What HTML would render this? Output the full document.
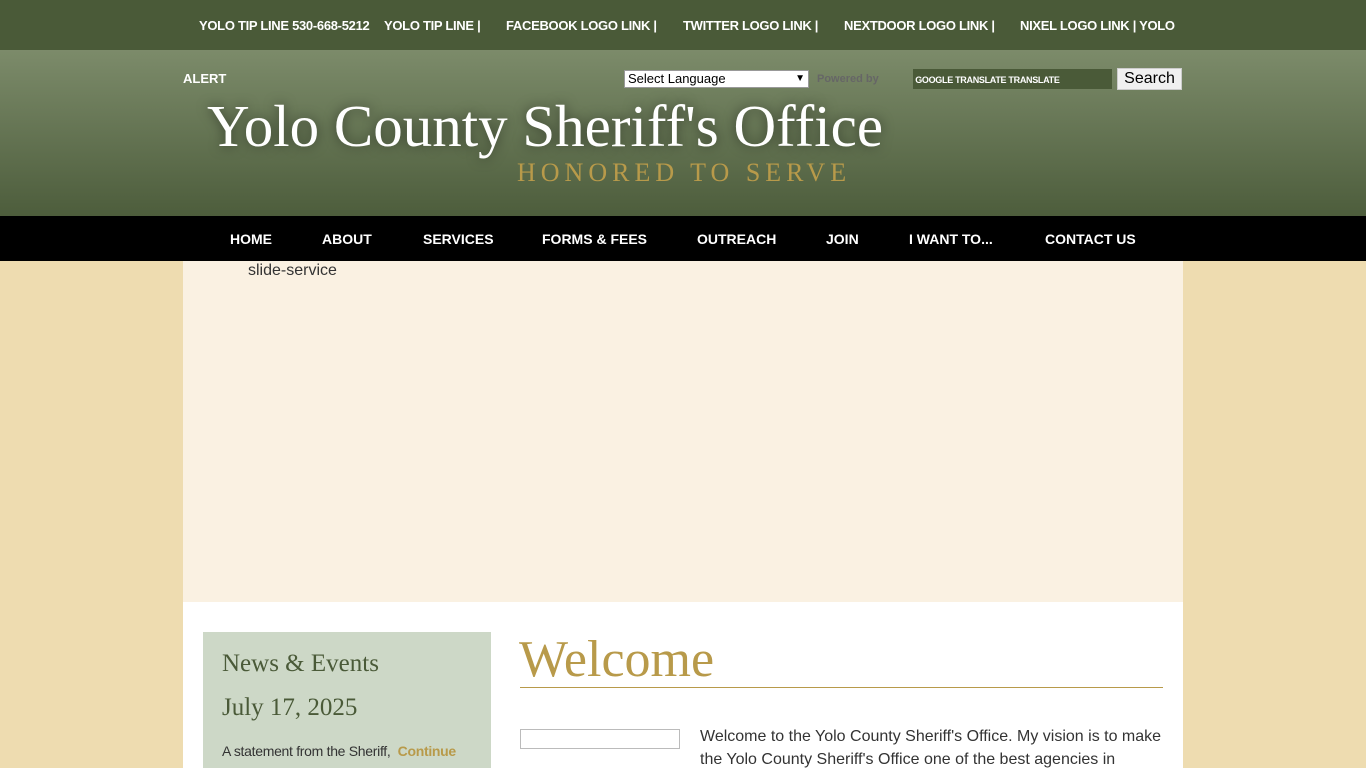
<!DOCTYPE html>
<html><head><meta charset="utf-8"><style>
*{margin:0;padding:0;box-sizing:border-box}
body{width:1366px;height:768px;overflow:hidden;background:#eedcb0;font-family:"Liberation Sans",sans-serif}
.top{position:absolute;left:0;top:0;width:1366px;height:50px;background:#4a5a38;color:#fff;font-weight:bold;font-size:13px;letter-spacing:-0.3px}
.top span{position:absolute;top:18px;white-space:nowrap}
.hdr{position:absolute;left:0;top:50px;width:1366px;height:166px;background:linear-gradient(#7c8b6a,#4d5d3c)}
.nav{position:absolute;left:0;top:216px;width:1366px;height:45px;background:#000}
.nav span{position:absolute;top:15px;color:#fff;font-weight:bold;font-size:14px}
.slide{position:absolute;left:183px;top:261px;width:1000px;height:341px;background:#faf1e2}
.main{position:absolute;left:183px;top:602px;width:1000px;height:166px;background:#fff;overflow:hidden}
.serif{font-family:"Liberation Serif",serif}
</style></head><body>
<div class="top">
<span style="left:199px">YOLO TIP LINE 530-668-5212</span>
<span style="left:384px">YOLO TIP LINE |</span>
<span style="left:506px">FACEBOOK LOGO LINK |</span>
<span style="left:683px">TWITTER LOGO LINK |</span>
<span style="left:844px">NEXTDOOR LOGO LINK |</span>
<span style="left:1020px">NIXEL LOGO LINK | YOLO</span>
</div>
<div class="hdr">
<div style="position:absolute;left:183px;top:21px;color:#fff;font-weight:bold;font-size:13px">ALERT</div>
<div style="position:absolute;left:624px;top:20px;width:185px;height:18px;background:#fff;border:1px solid #999;font-size:13px;padding-left:3px;line-height:16px">Select Language<span style="float:right;padding-right:3px;font-size:10px">▼</span></div>
<div style="position:absolute;left:817px;top:23px;color:#666;font-size:11px;font-weight:bold">Powered by</div>
<div style="position:absolute;left:913px;top:19px;width:199px;height:20px;background:#4a5a38;color:#fff;font-size:9px;font-weight:bold;line-height:22px;letter-spacing:-0.3px">&nbsp;GOOGLE TRANSLATE TRANSLATE</div>
<div style="position:absolute;left:1117px;top:18px;width:65px;height:22px;background:#f0f0f0;border:1px solid #ccc;font-size:16px;text-align:center;line-height:20px">Search</div>
<div class="serif" style="position:absolute;left:207px;top:42px;color:#fff;font-size:59px;text-shadow:0 0 12px rgba(0,0,0,.5);white-space:nowrap">Yolo County Sheriff's Office</div>
<div class="serif" style="position:absolute;left:517px;top:108px;color:#b89a4a;font-size:26px;letter-spacing:5px;white-space:nowrap">HONORED TO SERVE</div>
</div>
<div class="nav">
<span style="left:230px">HOME</span><span style="left:322px">ABOUT</span><span style="left:423px">SERVICES</span><span style="left:542px">FORMS &amp; FEES</span><span style="left:697px">OUTREACH</span><span style="left:826px">JOIN</span><span style="left:909px">I WANT TO...</span><span style="left:1045px">CONTACT US</span>
</div>
<div class="slide"><div style="position:absolute;left:65px;top:1px;font-size:16px;color:#333">slide-service</div></div>
<div class="main">
<div style="position:absolute;left:20px;top:30px;width:288px;height:140px;background:#cdd8c7">
<div class="serif" style="position:absolute;left:19px;top:18px;font-size:25px;color:#4a5a38">News &amp; Events</div>
<div class="serif" style="position:absolute;left:19px;top:62px;font-size:25px;color:#4a5a38">July 17, 2025</div>
<div style="position:absolute;left:19px;top:111px;font-size:14px;color:#333;letter-spacing:-0.3px">A statement from the Sheriff, &nbsp;<b style="color:#b89a4a">Continue</b></div>
</div>
<div class="serif" style="position:absolute;left:336px;top:28px;font-size:52px;color:#b89a4a">Welcome</div>
<div style="position:absolute;left:337px;top:85px;width:643px;height:1px;background:#b89a4a"></div>
<div style="position:absolute;left:337px;top:127px;width:160px;height:20px;border:1px solid #bbb"></div>
<div style="position:absolute;left:517px;top:123px;width:470px;font-size:16px;line-height:23px;color:#333">Welcome to the Yolo County Sheriff's Office. My vision is to make the Yolo County Sheriff's Office one of the best agencies in</div>
</div>
</body></html>
